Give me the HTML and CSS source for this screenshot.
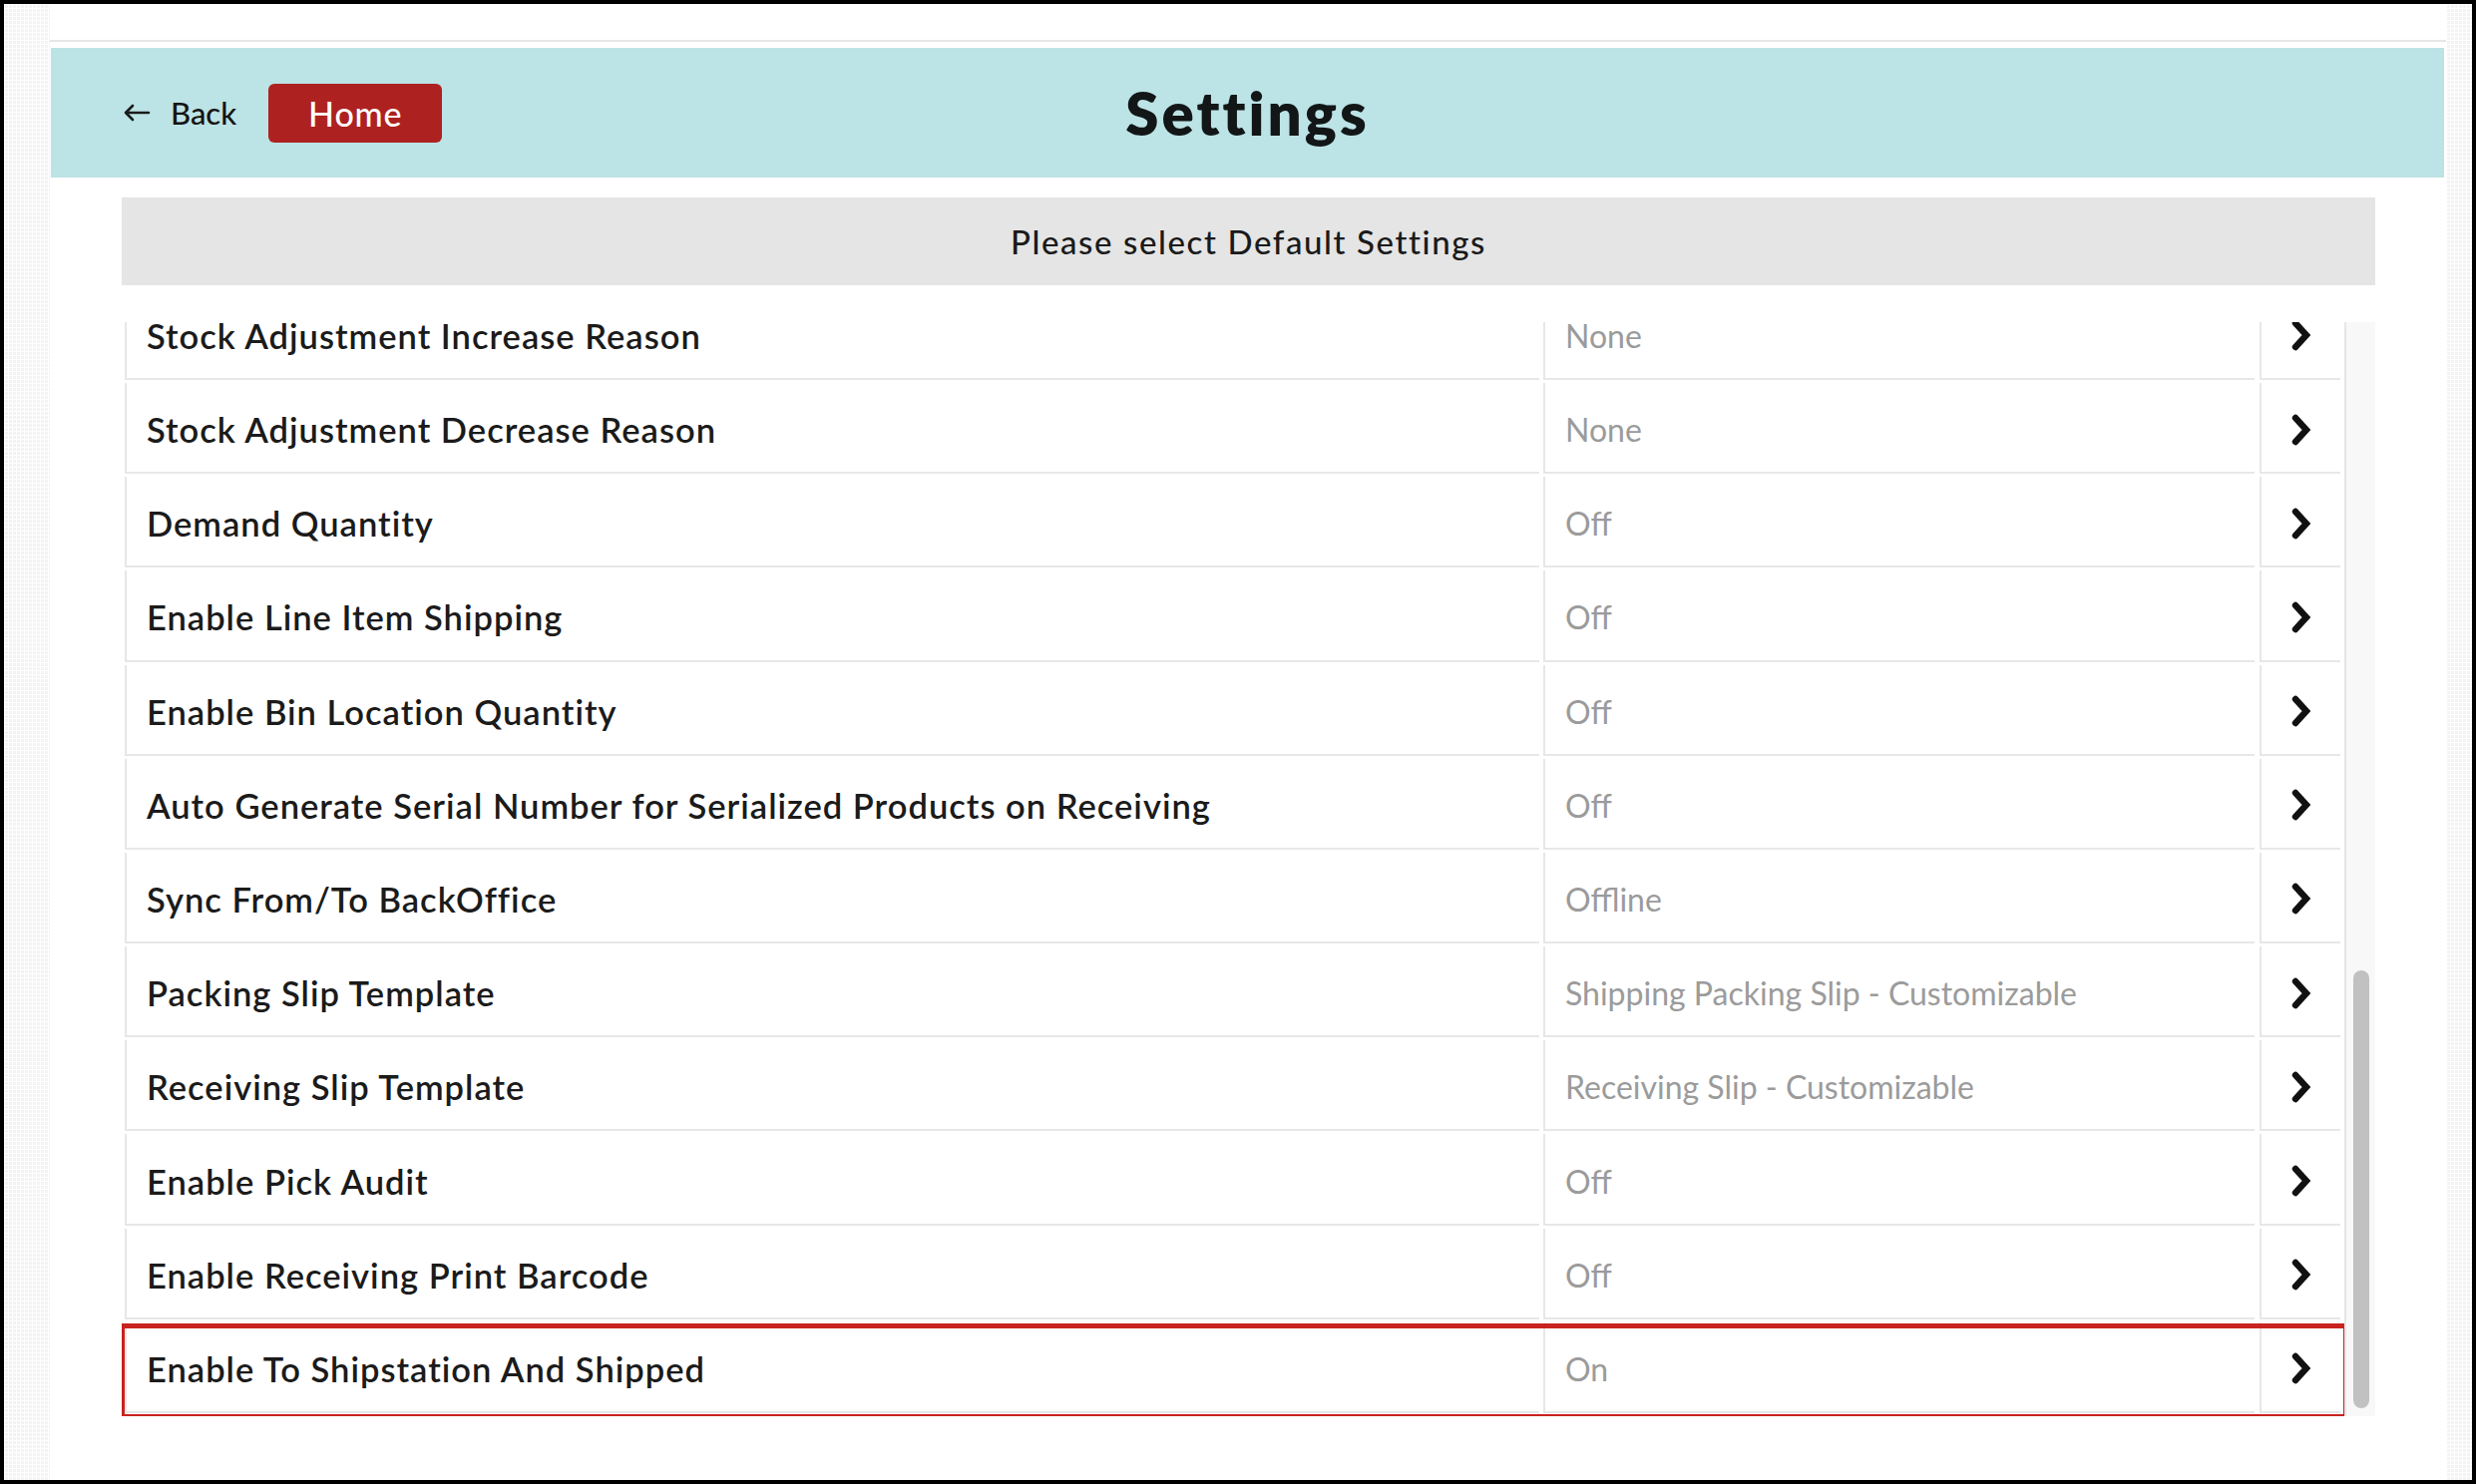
FILE: index.html
```html
<!DOCTYPE html>
<html lang="en">
<head>
<meta charset="utf-8">
<title>Settings</title>
<link rel="stylesheet" href="styles.css">
</head>
<body>
<div class="frame">
  <div class="desk">
    <div class="app">
      <div class="topstrip"></div>
      <header class="hdr">
        <div class="hdr-left">
          <button class="back" type="button">
            <svg class="back-ico" viewBox="0 0 28 18" width="28" height="18" aria-hidden="true"><path d="M26 9H3M10 2L3 9l7 7" fill="none" stroke="#1b1b1b" stroke-width="2.6" stroke-linecap="round" stroke-linejoin="round"/></svg>
            <span>Back</span>
          </button>
          <button class="home" type="button">Home</button>
        </div>
        <h1 class="title">Settings</h1>
        <div class="hdr-right"></div>
      </header>
      <main class="content">
        <div class="banner">Please select Default Settings</div>
        <div class="listwrap">
          <div class="list">
            <div class="row"><div class="c-label">Stock Adjustment Increase Reason</div><div class="c-val">None</div><div class="c-arr"><svg viewBox="0 0 22 34" width="22" height="34"><path d="M5 5l11 12L5 29" fill="none" stroke="#111" stroke-width="6.4" stroke-linecap="round" stroke-linejoin="miter"/></svg></div></div>
            <div class="row"><div class="c-label">Stock Adjustment Decrease Reason</div><div class="c-val">None</div><div class="c-arr"><svg viewBox="0 0 22 34" width="22" height="34"><path d="M5 5l11 12L5 29" fill="none" stroke="#111" stroke-width="6.4" stroke-linecap="round" stroke-linejoin="miter"/></svg></div></div>
            <div class="row"><div class="c-label">Demand Quantity</div><div class="c-val">Off</div><div class="c-arr"><svg viewBox="0 0 22 34" width="22" height="34"><path d="M5 5l11 12L5 29" fill="none" stroke="#111" stroke-width="6.4" stroke-linecap="round" stroke-linejoin="miter"/></svg></div></div>
            <div class="row"><div class="c-label">Enable Line Item Shipping</div><div class="c-val">Off</div><div class="c-arr"><svg viewBox="0 0 22 34" width="22" height="34"><path d="M5 5l11 12L5 29" fill="none" stroke="#111" stroke-width="6.4" stroke-linecap="round" stroke-linejoin="miter"/></svg></div></div>
            <div class="row"><div class="c-label">Enable Bin Location Quantity</div><div class="c-val">Off</div><div class="c-arr"><svg viewBox="0 0 22 34" width="22" height="34"><path d="M5 5l11 12L5 29" fill="none" stroke="#111" stroke-width="6.4" stroke-linecap="round" stroke-linejoin="miter"/></svg></div></div>
            <div class="row"><div class="c-label">Auto Generate Serial Number for Serialized Products on Receiving</div><div class="c-val">Off</div><div class="c-arr"><svg viewBox="0 0 22 34" width="22" height="34"><path d="M5 5l11 12L5 29" fill="none" stroke="#111" stroke-width="6.4" stroke-linecap="round" stroke-linejoin="miter"/></svg></div></div>
            <div class="row"><div class="c-label">Sync From/To BackOffice</div><div class="c-val">Offline</div><div class="c-arr"><svg viewBox="0 0 22 34" width="22" height="34"><path d="M5 5l11 12L5 29" fill="none" stroke="#111" stroke-width="6.4" stroke-linecap="round" stroke-linejoin="miter"/></svg></div></div>
            <div class="row"><div class="c-label">Packing Slip Template</div><div class="c-val">Shipping Packing Slip - Customizable</div><div class="c-arr"><svg viewBox="0 0 22 34" width="22" height="34"><path d="M5 5l11 12L5 29" fill="none" stroke="#111" stroke-width="6.4" stroke-linecap="round" stroke-linejoin="miter"/></svg></div></div>
            <div class="row"><div class="c-label">Receiving Slip Template</div><div class="c-val">Receiving Slip - Customizable</div><div class="c-arr"><svg viewBox="0 0 22 34" width="22" height="34"><path d="M5 5l11 12L5 29" fill="none" stroke="#111" stroke-width="6.4" stroke-linecap="round" stroke-linejoin="miter"/></svg></div></div>
            <div class="row"><div class="c-label">Enable Pick Audit</div><div class="c-val">Off</div><div class="c-arr"><svg viewBox="0 0 22 34" width="22" height="34"><path d="M5 5l11 12L5 29" fill="none" stroke="#111" stroke-width="6.4" stroke-linecap="round" stroke-linejoin="miter"/></svg></div></div>
            <div class="row"><div class="c-label">Enable Receiving Print Barcode</div><div class="c-val">Off</div><div class="c-arr"><svg viewBox="0 0 22 34" width="22" height="34"><path d="M5 5l11 12L5 29" fill="none" stroke="#111" stroke-width="6.4" stroke-linecap="round" stroke-linejoin="miter"/></svg></div></div>
            <div class="row row-hl"><div class="c-label">Enable To Shipstation And Shipped</div><div class="c-val">On</div><div class="c-arr"><svg viewBox="0 0 22 34" width="22" height="34"><path d="M5 5l11 12L5 29" fill="none" stroke="#111" stroke-width="6.4" stroke-linecap="round" stroke-linejoin="miter"/></svg></div></div>
          </div>
          <div class="track"><div class="thumb"></div></div>
        </div>
      </main>
    </div>
  </div>
</div>
</body>
</html>
```
FILE: styles.css
```css
* { box-sizing: border-box; }
html, body { margin: 0; padding: 0; }
body {
  width: 2482px;
  height: 1488px;
  overflow: hidden;
  background: #000;
  font-family: "Lato", "Open Sans", sans-serif;
  color: #1b1b1b;
}
.frame {
  width: 2482px;
  height: 1488px;
  padding: 4px;
  background: #000;
}
.desk {
  height: 100%;
  display: flex;
  padding: 0 26px 0 46px;
  background-color: #f3f3f3;
  background-image:
    linear-gradient(90deg, #ffffff 1px, transparent 1px),
    linear-gradient(#ffffff 1px, transparent 1px);
  background-size: 4px 4px;
}
.app {
  flex: 1;
  background: #fff;
  display: flex;
  flex-direction: column;
}
.topstrip {
  height: 38px;
  border-bottom: 2px solid #e6e6e6;
  flex: none;
}
.hdr {
  flex: none;
  margin: 6px 2px 0 1px;
  height: 130px;
  background: #bce3e5;
  display: grid;
  grid-template-columns: 1fr auto 1fr;
  align-items: center;
  padding: 0 72px;
}
.hdr-left {
  display: flex;
  align-items: center;
  gap: 32px;
}
.back {
  display: flex;
  align-items: center;
  gap: 20px;
  background: none;
  border: 0;
  padding: 0;
  font-family: inherit;
  font-size: 31px;
  font-weight: 500;
  color: #141414;
  cursor: pointer;
}
.back-ico { display: block; }
.home {
  width: 174px;
  height: 59px;
  background: #ad2220;
  color: #fff;
  border: 0;
  border-radius: 6px;
  font-family: inherit;
  font-size: 34px;
  font-weight: 500;
  letter-spacing: 0.8px;
  padding: 0;
  cursor: pointer;
}
.title {
  margin: 0;
  font-size: 60px;
  font-weight: 800;
  color: #121617;
  letter-spacing: 3px;
}
.content {
  flex: 1;
  padding: 0 71px 0 72px;
  display: flex;
  flex-direction: column;
}
.banner {
  margin-top: 20px;
  height: 88px;
  background: #e5e5e5;
  display: flex;
  align-items: center;
  justify-content: center;
  font-size: 33px;
  font-weight: 500;
  letter-spacing: 1.6px;
  color: #1a1a1a;
}
.listwrap {
  margin-top: 37px;
  height: 1097px;
  display: flex;
}
.list {
  flex: 1;
  overflow: hidden;
  display: flex;
  flex-direction: column;
  justify-content: flex-end;
  padding: 0 4px 0 3px;
}
.row {
  flex: none;
  display: flex;
  gap: 4px;
  height: 91.2px;
  margin-bottom: 3px;
  position: relative;
}
.row > div {
  border-left: 2px solid #e7e7e7;
  border-bottom: 2px solid #e7e7e7;
  display: flex;
  align-items: center;
  padding-top: 4px;
}
.c-label {
  flex: 1;
  padding-left: 20px;
  font-size: 34.5px;
  font-weight: 600;
  letter-spacing: 1px;
  color: #1b1b1b;
}
.c-val {
  width: 713px;
  padding-left: 20px;
  font-size: 32px;
  font-weight: 400;
  color: #9b9b9b;
}
.c-arr {
  width: 81px;
  justify-content: center;
  margin-left: 1px;
}
.c-arr svg { display: block; }
.row-hl::after {
  content: "";
  position: absolute;
  top: 1px;
  left: -5px;
  right: -8px;
  bottom: -6px;
  border: 5px solid #c9231f;
  pointer-events: none;
}
.track {
  width: 31px;
  flex: none;
  background: #f8f8f8;
  border-left: 2px solid #e6e6e6;
  display: flex;
  flex-direction: column;
  justify-content: flex-end;
  align-items: center;
  padding-bottom: 8px;
}
.thumb {
  width: 16px;
  height: 439px;
  border-radius: 8px;
  background: #c1c1c1;
}
```
